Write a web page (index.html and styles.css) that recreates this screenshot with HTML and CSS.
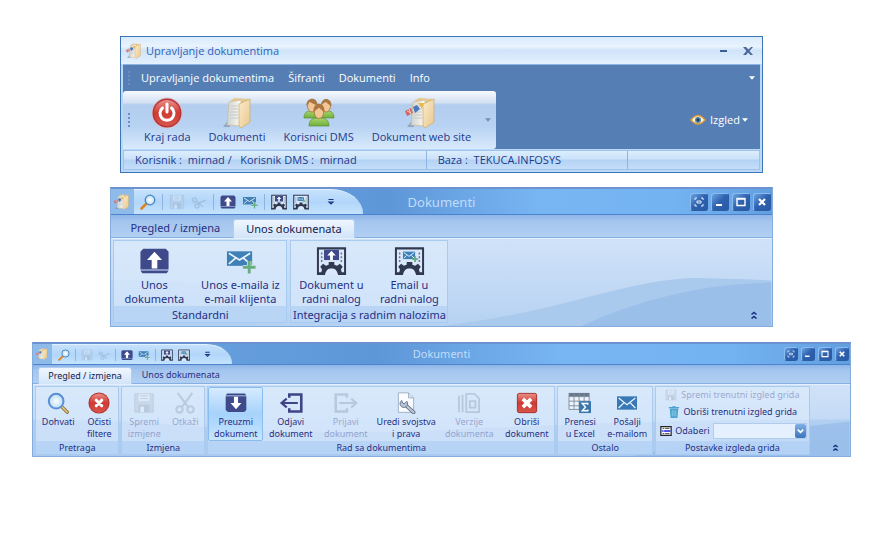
FILE: index.html
```html
<!DOCTYPE html>
<html lang="hr">
<head>
<meta charset="utf-8">
<title>Upravljanje dokumentima</title>
<link rel="stylesheet" href="styles.css">
</head>
<body>
<svg class="sprite" aria-hidden="true">
  <defs>
    <linearGradient id="g-red" x1="0" y1="0" x2="0" y2="1"><stop offset="0" stop-color="#e98f86"/><stop offset="0.5" stop-color="#cf3a34"/><stop offset="1" stop-color="#d8564c"/></linearGradient>
    <linearGradient id="g-folder" x1="0" y1="0" x2="1" y2="1"><stop offset="0" stop-color="#fbebca"/><stop offset="1" stop-color="#e8c88f"/></linearGradient>
    <linearGradient id="g-paper" x1="0" y1="0" x2="1" y2="0"><stop offset="0" stop-color="#cfd2cf"/><stop offset="1" stop-color="#fbfbf6"/></linearGradient>
    <linearGradient id="g-green" x1="0" y1="0" x2="0" y2="1"><stop offset="0" stop-color="#a9d56a"/><stop offset="1" stop-color="#6fae3d"/></linearGradient>
    <radialGradient id="g-lens"><stop offset="0" stop-color="#ffffff"/><stop offset="1" stop-color="#b5dcf7"/></radialGradient>
    <symbol id="power" viewBox="0 0 32 32"><circle cx="16" cy="16" r="15.500" fill="#d5c4cb"/><circle cx="16" cy="16" r="14.500" fill="#b8323a"/><circle cx="16" cy="16" r="13" fill="url(#g-red)"/><path d="M11.500 11a7 7 0 1 0 9 0M16 7v8" fill="none" stroke="#fff" stroke-width="3" stroke-linecap="round"/></symbol>
    <symbol id="folder" viewBox="0 0 32 32"><path d="M2 30l7-9v9z" fill="#7d8ba0" opacity=".6"/><path d="M10 3l4-2 14 1v25l-17 2z" fill="#e6c88f"/><path d="M8 5l12-2v26l-14-1z" fill="url(#g-paper)" stroke="#c9b58c" stroke-width=".6"/><path d="M10 9h7M10 12h7M9 15h8M9 18h8M9 21h8" stroke="#c5c9ca"/><path d="M18 7l11-5v23l-9 6-2-2z" fill="url(#g-folder)" stroke="#cfa968" stroke-width=".7"/></symbol>
    <symbol id="webdoc" viewBox="0 0 32 32"><use href="#folder"/><path d="M0 14l6-3 2 5-6 3z" fill="#d3655f"/><path d="M8 10l4-2 3 4-5 4z" fill="#4978bd"/><path d="M13 6l6 0-2 6z" fill="#e8b94d"/><path d="M2 14l4 2M4 12l2 5" stroke="#f4d0ca"/></symbol>
    <symbol id="users" viewBox="0 0 32 32"><g stroke="#5f9434" stroke-width=".7"><path d="M1 21c0-6 3-7 8-7s6 2 6 7z" fill="url(#g-green)"/><path d="M17 21c0-6 3-7 7-7s7 1 7 7z" fill="url(#g-green)"/><path d="M6 29c0-6 3-8 10-8s10 2 10 8z" fill="url(#g-green)"/></g><g fill="#f3c695" stroke="#a9733f" stroke-width=".8"><ellipse cx="9" cy="9" rx="4.500" ry="6"/><ellipse cx="23" cy="9" rx="4.500" ry="6"/><ellipse cx="16" cy="15" rx="4.700" ry="6.500"/></g><path d="M3.500 9c-1-9 11-10 11-1-4 0-6-3-8-3zM18 8c1-9 11-7 10.500 1-3-1-5-4-6-4zM10.500 15c-1-11 12-11 11 0-4-2-4-4-6-4z" fill="#ab7843"/></symbol>
    <symbol id="eye" viewBox="0 0 16 12"><path d="M1 6q7-9 14 0-7 8-14 0z" fill="#fff4dc" stroke="#dc9838" stroke-width="1.600"/><circle cx="8" cy="6" r="3" fill="#4e86a9"/><circle cx="8" cy="6" r="1.400" fill="#173a56"/></symbol>
    <symbol id="lens" viewBox="0 0 16 16"><path d="M6.500 9.500L1.500 14.500" stroke="#e08325" stroke-width="2.600" stroke-linecap="round"/><circle cx="10" cy="6" r="4.800" fill="url(#g-lens)" stroke="#4b87bd" stroke-width="1.300"/></symbol>
    <symbol id="search" viewBox="0 0 24 24"><path d="M16 16l6 6" stroke="#80642e" stroke-width="3.600" stroke-linecap="round"/><path d="M16 16l6 6" stroke="#e6c37a" stroke-width="1.800" stroke-linecap="round"/><circle cx="10" cy="10" r="8" fill="url(#g-lens)" stroke="#5b8ed2" stroke-width="2.200"/></symbol>
    <symbol id="floppy" viewBox="0 0 24 24"><path d="M2 2h20v20H2z" fill="#b1bccb" stroke="#8c9bb0"/><path d="M6 2h12v8H6z" fill="#e7edf5"/><path d="M8 4h8M8 7h8" stroke="#8c9bb0"/><path d="M6 14h12v8H6z" fill="#8c9bb0"/><path d="M8 16h4v6H8z" fill="#edf2f8"/></symbol>
    <symbol id="scissors" viewBox="0 0 24 24"><g fill="none" stroke="#8797ac" stroke-width="2.200"><path d="M4 1l11 15M20 1L9 16"/><circle cx="6" cy="19" r="3.500"/><circle cx="18" cy="19" r="3.500"/></g></symbol>
    <symbol id="snips" viewBox="0 0 16 16"><g fill="none" stroke="#8797ac" stroke-width="1.500"><path d="M15 6L6 10M12 13L5 7"/><circle cx="3.500" cy="6" r="2"/><circle cx="6" cy="12" r="2"/></g></symbol>
    <symbol id="upload" viewBox="0 0 32 32"><path d="M4 3h24l3 3v19H1V6z" fill="#3f4a8a"/><path d="M1 26h30l-2 3H3z" fill="#3f4a8a"/><path d="M16 6l8 9h-5v9h-6v-9H8z" fill="#fff"/></symbol>
    <symbol id="download" viewBox="0 0 32 32"><path d="M3 2h26l2 3H1z" fill="#3f4a8a"/><path d="M1 6h30v20l-3 3H4l-3-3z" fill="#3f4a8a"/><path d="M16 25l-8-9h5V7h6v9h5z" fill="#fff"/></symbol>
    <symbol id="mail" viewBox="0 0 24 16"><path d="M0 0h24v16H0z" fill="#3878b4"/><path d="M2 2l10 8 10-8M2 14l7-7M22 14l-7-7" fill="none" stroke="#eaf4ff" stroke-width="1.500"/></symbol>
    <symbol id="mailadd" viewBox="0 0 32 28"><path d="M2 4h26v15H2z" fill="#3f80b6"/><path d="M4 6l11 7 11-7M4 17l7-6M26 17l-7-6" fill="none" stroke="#eaf4ff" stroke-width="1.700"/><path d="M25 14v13M18.500 20.500h13" stroke="#d7e7fa" stroke-width="4.500"/><path d="M25 14v13M18.500 20.500h13" stroke="#67ad80" stroke-width="3"/></symbol>
    <symbol id="gearframe" viewBox="0 0 32 32"><path d="M1.500 31V2.500h29V31" fill="#d9e8fa" stroke="#303951" stroke-width="2.200"/><path d="M5.500 7v10M26.500 7v10" stroke="#6b7891" stroke-width="1.600" stroke-dasharray="2 2"/><path d="M1 31v-3h4l1-3-2-3 3-3 3 2 3-1v-3h6v3l3 1 3-2 3 3-2 3 1 3h4v3h-8c-1-5-3-7-7-7s-6 2-7 7z" fill="#303951"/></symbol>
    <symbol id="gearup" viewBox="0 0 32 32"><use href="#gearframe"/><path d="M8 4h16v11H8z" fill="#3f4a8a"/><path d="M16 5l4.500 5h-3v5h-3v-5h-3z" fill="#fff"/></symbol>
    <symbol id="gearmail" viewBox="0 0 32 32"><use href="#gearframe"/><path d="M9 6h13v8H9z" fill="#3f80b6"/><path d="M10 7l5.500 4L21 7M10 13l3-3M21 13l-3-3" fill="none" stroke="#eaf4ff"/><path d="M22 11v6M19 14h6" stroke="#67ad80" stroke-width="2"/></symbol>
    <symbol id="clear" viewBox="0 0 24 24"><circle cx="12" cy="12" r="11.500" fill="#b5302b"/><circle cx="12" cy="12" r="10.500" fill="url(#g-red)"/><path d="M9 9l6 6M15 9l-6 6" stroke="#fff" stroke-width="3.400" stroke-linecap="round"/></symbol>
    <symbol id="delete" viewBox="0 0 24 24"><rect x="1.500" y="1.500" width="21" height="21" rx="2" fill="url(#g-red)" stroke="#a32a20"/><path d="M7.500 7.500l9 9M16.500 7.500l-9 9" stroke="#fff" stroke-width="4"/></symbol>
    <symbol id="checkout" viewBox="0 0 28 24"><path d="M12 6V2h14v20H12v-4" fill="none" stroke="#3f4484" stroke-width="3"/><path d="M22 12H4M9 7l-6 5 6 5" fill="none" stroke="#3f4484" stroke-width="2.600"/></symbol>
    <symbol id="checkin" viewBox="0 0 28 24"><path d="M15 6V2H2v20h13v-4" fill="none" stroke="#8390aa" stroke-width="3"/><path d="M6 12h19M20 7l6 5-6 5" fill="none" stroke="#8390aa" stroke-width="2.600"/></symbol>
    <symbol id="props" viewBox="0 0 24 26"><path d="M3 1h12l6 6v17H3z" fill="#fafcff" stroke="#98a6bd"/><path d="M15 1v6h6" fill="#d8e2f0" stroke="#98a6bd"/><path d="M11 15l10 9" stroke="#56657e" stroke-width="4.400" stroke-linecap="round"/><path d="M11 15l10 9" stroke="#b9c5d6" stroke-width="2.600" stroke-linecap="round"/><path d="M7 10a4.500 4.500 0 1 0 6 1l-3 3-2-1z" fill="#b9c5d6" stroke="#56657e"/></symbol>
    <symbol id="versions" viewBox="0 0 26 24"><g fill="none" stroke="#8390aa" stroke-width="2"><path d="M2 22V4M6 22V3M10 22V2h9l5 5v15z"/><path d="M14 10h6v7h-6z"/></g></symbol>
    <symbol id="excel" viewBox="0 0 26 24"><path d="M1 1h22v18H1z" fill="#edf4fc"/><path d="M1 1h22v4H1z" fill="#68798c"/><path d="M1 5h22M1 10h22M1 15h22M1 19h12M1 1v18M6.500 1v18M12 1v18M17.500 1v10M23 1v10" stroke="#7c8c9d" fill="none"/><path d="M12 10h13v13H12z" fill="#3977ae"/><path d="M21.500 14v-1.500h-6l3.500 4-3.500 4h6V19" fill="none" stroke="#fff" stroke-width="1.600"/></symbol>
    <symbol id="trash" viewBox="0 0 12 14"><path d="M1 3h10l-1 11H2z" fill="#4aa3cf"/><path d="M0 2h12M4 1h4" stroke="#4aa3cf" stroke-width="1.500"/><path d="M4 5v7M6 5v7M8 5v7" stroke="#8ccbe8"/></symbol>
    <symbol id="list" viewBox="0 0 14 12"><path d="M1 1h12v10H1z" fill="#fff" stroke="#202228" stroke-width="1.400"/><path d="M2 5h10v2H2z" fill="#3038e8"/><path d="M3 3h2M3 9h2M6 3h5M6 9h5" stroke="#2c2c38"/><path d="M3 6h2" stroke="#fff"/></symbol>
    <symbol id="caret" viewBox="0 0 7 4"><path d="M0 0h7L3.500 4z" fill="currentColor"/></symbol>
    <symbol id="more" viewBox="0 0 8 8"><path d="M1.500 1.500h5M2 4h4L4 6z" fill="none" stroke="currentColor" stroke-width="1.200"/></symbol>
    <symbol id="collapse" viewBox="0 0 8 8"><path d="M1.500 3.500L4 1.500l2.500 2M1.500 7.500l2.500-2 2.500 2" fill="none" stroke="#152a80" stroke-width="1.500"/></symbol>
    <symbol id="w-full" viewBox="0 0 16 16"><path d="M4 6V4h2M10 4h2v2M12 10v2h-2M6 12H4v-2" fill="none" stroke="#e6f3ff"/><path d="M6 7h4v2H6z" fill="none" stroke="#e6f3ff"/></symbol>
    <symbol id="w-min" viewBox="0 0 16 16"><path d="M4 11h6" stroke="#fff" stroke-width="2"/></symbol>
    <symbol id="w-max" viewBox="0 0 16 16"><path d="M4 4.500h8v7H4zM4 5h8" fill="none" stroke="#fff" stroke-width="1.400"/></symbol>
    <symbol id="w-close" viewBox="0 0 16 16"><path d="M5 5l6 6M11 5l-6 6" stroke="#fff" stroke-width="2.200"/></symbol>
  </defs>
</svg>

<main class="page">
  <section class="main-window">
    <header class="caption">
      <svg class="i16"><use href="#webdoc"/></svg>
      <span class="caption-text">Upravljanje dokumentima</span>
      <button class="plain" aria-label="Minimiziraj"><svg class="i12" viewBox="0 0 12 12"><path d="M3 6h7" stroke="#3c5d92" stroke-width="2"/></svg></button>
      <button class="plain" aria-label="Zatvori"><svg class="i12" viewBox="0 0 12 12"><path d="M1 2h3l2.500 2.500L9 2h2L7.500 6l3.500 4H8.500L6 7.500 4 10H1l3.500-4z" fill="#4a6698"/></svg></button>
    </header>
    <div class="main-body">
      <nav class="menubar">
        <i class="grip"></i>
        <a href="#">Upravljanje dokumentima</a>
        <a href="#">Šifranti</a>
        <a href="#">Dokumenti</a>
        <a href="#">Info</a>
        <svg class="caret menu-caret"><use href="#caret"/></svg>
      </nav>
      <div class="toolrow">
        <div class="toolbar">
          <i class="grip"></i>
          <button class="tool"><svg class="i32"><use href="#power"/></svg>Kraj rada</button>
          <button class="tool"><svg class="i32"><use href="#folder"/></svg>Dokumenti</button>
          <button class="tool"><svg class="i32"><use href="#users"/></svg>Korisnici DMS</button>
          <button class="tool"><svg class="i32"><use href="#webdoc"/></svg>Dokument web site</button>
          <svg class="caret tool-caret"><use href="#caret"/></svg>
        </div>
        <button class="view"><svg class="eye"><use href="#eye"/></svg>Izgled<svg class="caret"><use href="#caret"/></svg></button>
      </div>
    </div>
    <footer class="status">
      <span class="status-user">Korisnik :&nbsp; mirnad /&nbsp;&nbsp; Korisnik DMS :&nbsp; mirnad</span>
      <span class="status-base">Baza :&nbsp; TEKUCA.INFOSYS</span>
      <span class="status-rest"></span>
    </footer>
  </section>

  <section class="ribbon large">
    <header class="titlebar">
      <div class="quick">
        <span class="app"><svg class="qi"><use href="#webdoc"/></svg></span>
        <div class="quick-items">
          <button aria-label="Dohvati"><svg class="qi"><use href="#lens"/></svg></button><i class="sep"></i>
          <button aria-label="Spremi" disabled><svg class="qi"><use href="#floppy"/></svg></button>
          <button aria-label="Otkaži" disabled><svg class="qi"><use href="#snips"/></svg></button><i class="sep"></i>
          <button aria-label="Unos dokumenta"><svg class="qi"><use href="#upload"/></svg></button>
          <button aria-label="Unos e-maila"><svg class="qi"><use href="#mailadd"/></svg></button><i class="sep"></i>
          <button aria-label="Dokument u radni nalog"><svg class="qi"><use href="#gearup"/></svg></button>
          <button aria-label="Email u radni nalog"><svg class="qi"><use href="#gearmail"/></svg></button>
          <button class="more" aria-label="Više"><svg><use href="#more"/></svg></button>
        </div>
      </div>
      <h2>Dokumenti</h2>
      <div class="controls">
        <button aria-label="Cijeli zaslon"><svg><use href="#w-full"/></svg></button>
        <button aria-label="Minimiziraj"><svg><use href="#w-min"/></svg></button>
        <button aria-label="Maksimiziraj"><svg><use href="#w-max"/></svg></button>
        <button aria-label="Zatvori"><svg><use href="#w-close"/></svg></button>
      </div>
    </header>
    <nav class="tabs">
      <button class="tab">Pregled / izmjena</button>
      <button class="tab active">Unos dokumenata</button>
    </nav>
    <div class="panel">
      <svg class="waves" viewBox="0 0 660 88" preserveAspectRatio="none"><path d="M0 42q40-2 85 4t60 10v32H0z" fill="#a9caf0" opacity=".35"/><path d="M330 88Q400 80 480 58T600 40q30 0 60 2v46z" fill="#a9c9ed"/><path d="M470 88Q560 46 660 44v44z" fill="#9ac0ea"/></svg>
      <div class="group">
        <div class="actions">
          <button class="action w80"><svg class="gi"><use href="#upload"/></svg><span>Unos<br>dokumenta</span></button>
          <button class="action w92"><svg class="gi"><use href="#mailadd"/></svg><span>Unos e-maila iz<br>e-mail klijenta</span></button>
        </div>
        <div class="group-name">Standardni</div>
      </div>
      <div class="group">
        <div class="actions">
          <button class="action w80"><svg class="gi"><use href="#gearup"/></svg><span>Dokument u<br>radni nalog</span></button>
          <button class="action w76"><svg class="gi"><use href="#gearmail"/></svg><span>Email u<br>radni nalog</span></button>
        </div>
        <div class="group-name">Integracija s radnim nalozima</div>
      </div>
      <button class="collapse" aria-label="Sakrij vrpcu"><svg><use href="#collapse"/></svg></button>
    </div>
  </section>

  <section class="ribbon small">
    <header class="titlebar">
      <div class="quick">
        <span class="app"><svg class="qi"><use href="#webdoc"/></svg></span>
        <div class="quick-items">
          <button aria-label="Dohvati"><svg class="qi"><use href="#lens"/></svg></button><i class="sep"></i>
          <button aria-label="Spremi" disabled><svg class="qi"><use href="#floppy"/></svg></button>
          <button aria-label="Otkaži" disabled><svg class="qi"><use href="#snips"/></svg></button><i class="sep"></i>
          <button aria-label="Unos dokumenta"><svg class="qi"><use href="#upload"/></svg></button>
          <button aria-label="Unos e-maila"><svg class="qi"><use href="#mailadd"/></svg></button><i class="sep"></i>
          <button aria-label="Dokument u radni nalog"><svg class="qi"><use href="#gearup"/></svg></button>
          <button aria-label="Email u radni nalog"><svg class="qi"><use href="#gearmail"/></svg></button>
          <button class="more" aria-label="Više"><svg><use href="#more"/></svg></button>
        </div>
      </div>
      <h2>Dokumenti</h2>
      <div class="controls">
        <button aria-label="Cijeli zaslon"><svg><use href="#w-full"/></svg></button>
        <button aria-label="Minimiziraj"><svg><use href="#w-min"/></svg></button>
        <button aria-label="Maksimiziraj"><svg><use href="#w-max"/></svg></button>
        <button aria-label="Zatvori"><svg><use href="#w-close"/></svg></button>
      </div>
    </header>
    <nav class="tabs">
      <button class="tab active">Pregled / izmjena</button>
      <button class="tab">Unos dokumenata</button>
    </nav>
    <div class="panel">
      <svg class="waves" viewBox="0 0 816 70" preserveAspectRatio="none"><path d="M0 34q90 0 180 8t230 2 220-8 186-2v36H0z" fill="#9cc2ee" opacity=".45"/><path d="M600 70q100-22 216-34v34z" fill="#8db6e6" opacity=".55"/></svg>
      <div class="group">
        <div class="actions">
          <button class="action w44"><svg class="gi"><use href="#search"/></svg><span>Dohvati</span></button>
          <button class="action w38"><svg class="gi"><use href="#clear"/></svg><span>Očisti<br>filtere</span></button>
        </div>
        <div class="group-name">Pretraga</div>
      </div>
      <div class="group">
        <div class="actions">
          <button class="action w44" disabled><svg class="gi"><use href="#floppy"/></svg><span>Spremi<br>izmjene</span></button>
          <button class="action w38" disabled><svg class="gi"><use href="#scissors"/></svg><span>Otkaži</span></button>
        </div>
        <div class="group-name">Izmjena</div>
      </div>
      <div class="group">
        <div class="actions">
          <button class="action w55 hot"><svg class="gi"><use href="#download"/></svg><span>Preuzmi<br>dokument</span></button>
          <button class="action w55"><svg class="gi"><use href="#checkout"/></svg><span>Odjavi<br>dokument</span></button>
          <button class="action w55" disabled><svg class="gi"><use href="#checkin"/></svg><span>Prijavi<br>dokument</span></button>
          <button class="action w66"><svg class="gi"><use href="#props"/></svg><span>Uredi svojstva<br>i prava</span></button>
          <button class="action w60" disabled><svg class="gi"><use href="#versions"/></svg><span>Verzije<br>dokumenta</span></button>
          <button class="action w55"><svg class="gi"><use href="#delete"/></svg><span>Obriši<br>dokument</span></button>
        </div>
        <div class="group-name">Rad sa dokumentima</div>
      </div>
      <div class="group">
        <div class="actions">
          <button class="action w44"><svg class="gi"><use href="#excel"/></svg><span>Prenesi<br>u Excel</span></button>
          <button class="action w50"><svg class="gi mail"><use href="#mail"/></svg><span>Pošalji<br>e-mailom</span></button>
        </div>
        <div class="group-name">Ostalo</div>
      </div>
      <div class="group">
        <div class="actions layout-actions">
          <button class="line" disabled><svg class="i12"><use href="#floppy"/></svg>Spremi trenutni izgled grida</button>
          <button class="line"><svg class="i12"><use href="#trash"/></svg>Obriši trenutni izgled grida</button>
          <div class="pick">
            <svg class="i12"><use href="#list"/></svg>
            <label for="layout">Odaberi</label>
            <span class="select"><select id="layout"><option></option></select><svg viewBox="0 0 12 14"><path d="M3 5.500l3 3 3-3" fill="none" stroke="#fff" stroke-width="1.800"/></svg></span>
          </div>
        </div>
        <div class="group-name">Postavke izgleda grida</div>
      </div>
      <button class="collapse" aria-label="Sakrij vrpcu"><svg><use href="#collapse"/></svg></button>
    </div>
  </section>
</main>
</body>
</html>
```
FILE: styles.css
```css
* { box-sizing: border-box; }
body { margin: 0; background: #fff; color: #1d3a8c; font: 11px/16px "Open Sans", "Noto Sans", sans-serif; }
button, select { margin: 0; padding: 0; border: 0; background: none; color: inherit; font: inherit; }
svg { display: block; flex: none; }
.sprite { position: absolute; width: 0; height: 0; }
.page { display: flex; flex-direction: column; align-items: center; padding: 36px 2px 24px 0; }
.i12 { width: 12px; height: 12px; }
.i16 { width: 16px; height: 16px; }
.i32 { width: 32px; height: 32px; }

/* Main window */
.main-window { width: 72.8%; border: 1px solid #3c76b8; padding: 0 2px 2px; background: #bdd8f6; }
.caption { display: flex; align-items: center; gap: 4px; height: 27px; margin: 0 -2px; padding: 0 8px 0 5px; background: linear-gradient(#d9ebfc, #e9f3fd 35%, #cfe3f9 50%, #e4f1fe); color: #2f63b5; }
.caption-text { flex: 1; }
.plain { margin-left: 9px; }
.main-body { background: #557eb5; border-top: 1px solid #8cb4e2; }
.menubar { display: flex; align-items: center; gap: 14px; height: 26px; padding: 0 5px; }
.menubar a { color: #fff; text-decoration: none; }
.grip { width: 2px; height: 14px; background: repeating-linear-gradient(#6d8fc0 0 2px, transparent 2px 4px); }
.menubar .grip { margin-right: -3px; }
.caret { width: 6px; height: 4px; color: #fff; }
.menu-caret { margin-left: auto; }
.toolrow { display: flex; justify-content: space-between; align-items: center; height: 58px; }
.toolbar { display: flex; align-items: center; height: 58px; padding: 0 5px; border-radius: 3px 3px 3px 0; background: linear-gradient(#f6faff, #d3e1f3 20%, #b3cdee 24%, #b7d2f2 60%, #d8eafc); }
.toolbar .grip { margin-right: 5px; }
.tool { display: flex; flex-direction: column; align-items: center; padding: 2px 9px 0; }
.tool-caret { color: #7290bb; margin-left: 5px; }
.view { display: flex; align-items: center; gap: 4px; margin-right: 12px; color: #fff; }
.view .caret { margin-left: -2px; }
.eye { width: 16px; height: 12px; }
.status { display: flex; align-items: stretch; height: 20px; margin-top: 1px; border: 1px solid #9dc2ec; background: linear-gradient(#dcedfd, #cbe2fa 45%, #b3d2f4 50%, #c5defa); line-height: 18px; }
.status span { padding-left: 11px; }
.status-user { flex: 0 0 47.500%; }
.status-base { flex: 0 0 31.800%; border-left: 1px solid #8fb5e0; }
.status-rest { flex: 1; border-left: 1px solid #8fb5e0; }

/* Ribbon windows */
.ribbon { border: 1px solid #84addd; border-top: 2px solid #6c92cf; background: #a9caf0; color: #272f83; font-family: "Noto Sans", "Open Sans", sans-serif; }
.large { width: 75%; margin-top: 14px; font-size: 11px; line-height: 14px; --qi: 16px; --ctl: 18px; }
.small { width: 92.700%; margin-top: 15px; font-size: 9px; line-height: 12px; --qi: 12px; --ctl: 14px; }
.titlebar { display: grid; grid-template-columns: 1fr auto 1fr; align-items: center; background: linear-gradient(90deg, #6fa7e3, #5e97d8 42%, #78b5f3 65%, #74b3f2 85%, #629fdf); border-bottom: 1px solid #4d83cc; }
.large .titlebar { height: 26px; }
.small .titlebar { height: 21px; }
.titlebar h2 { margin: 0; color: #c1dcf8; font-weight: 400; font-size: 13px; line-height: 16px; }
.small h2 { font-size: 11px; }
.quick { display: flex; align-self: stretch; }
.app { display: flex; align-items: center; padding: 0 4px 0 3px; background: #8fbbea; }
.quick-items { display: flex; align-items: center; border-top: 1px solid #e1f1ff; border-radius: 0 32px 0 0 / 0 25px 0 0; background: linear-gradient(#c5e1fc, #b2d6fa 50%, #c3e3ff); }
.large .quick-items { gap: 6px; padding: 0 28px 0 6px; }
.small .quick-items { gap: 5px; padding: 0 21px 0 6px; }
.qi { width: var(--qi); height: var(--qi); }
.sep { width: 1px; height: 16px; background: #90b3de; }
.small .sep { height: 12px; }
button:disabled { opacity: .35; }
.more { margin-left: 12px; color: #1a3480; }
.small .more { margin-left: 9px; }
.more svg { width: 8px; height: 8px; }
.small .more svg { width: 7px; height: 7px; }
.controls { display: flex; justify-content: flex-end; gap: 3px; padding-right: 1px; }
.controls button { width: var(--ctl); height: var(--ctl); border: 1px solid #2a5ba5; border-top-color: #8bbcf0; border-left-color: #8bbcf0; border-radius: 3px; background: linear-gradient(135deg, #6aa3e4, #2f61ae 50%, #2a5aa8); }
.controls svg { width: 100%; height: 100%; }
.tabs { display: flex; align-items: flex-end; background: linear-gradient(#8db6e8, #a4c5ee 30%, #b1cff2); border-bottom: 1px solid #86afe2; }
.tab { border: 1px solid transparent; border-bottom: 0; border-radius: 3px 3px 0 0; white-space: nowrap; }
.tab.active { position: relative; margin-bottom: -1px; border-color: #b0cef2; background: linear-gradient(#f0f6fe, #d2e4f9); color: #111a50; }
.large .tabs { height: 23px; padding-left: 6px; }
.large .tab { height: 19px; padding: 0 12px; }
.small .tabs { height: 19px; padding-left: 5px; }
.small .tab { height: 17px; padding: 0 9px; }
.panel { position: relative; display: flex; border-top: 1px solid #e3effc; background: linear-gradient(#d0e2f8, #b6d2f2); }
.large .panel { gap: 3px; padding: 1px 2px 3px; }
.small .panel { gap: 2px; padding: 1px 2px; }
.waves { position: absolute; left: 0; top: 0; width: 100%; height: 100%; }
.group { position: relative; border: 1px solid #aacbf0; background: rgba(222, 237, 254, .6); text-align: center; }
.actions { display: flex; align-items: stretch; }
.large .actions { height: 65px; }
.small .actions { height: 54px; }
.action { display: flex; flex-direction: column; align-items: center; justify-content: flex-start; border: 1px solid transparent; white-space: nowrap; text-align: center; }
.large .action { padding-top: 4px; }
.small .action { padding-top: 4px; }
.gi { margin-bottom: 2px; }
.large .gi { width: 31px; height: 30px; }
.small .gi { width: 24px; height: 22px; }
.small .mail { width: 20px; }
.hot { border-color: #8bbcee; border-radius: 2px; background: linear-gradient(#d6ebff, #a6d2fb 50%, #c6e5ff); }
.w80 { width: 80px; }
.w92 { width: 92px; }
.w76 { width: 76px; }
.w38 { width: 38px; }
.w44 { width: 44px; }
.w50 { width: 50px; }
.w55 { width: 55px; }
.w60 { width: 60px; }
.w66 { width: 66px; }
.group-name { border-top: 1px solid #b9d4f4; background: rgba(172, 206, 244, .65); white-space: nowrap; }
.large .group-name { height: 16px; line-height: 15px; }
.small .group-name { height: 13px; line-height: 12px; }
.layout-actions { flex-direction: column; align-items: center; justify-content: space-around; }
.line, .pick { display: flex; align-items: center; gap: 4px; white-space: nowrap; }
.pick { gap: 3px; padding: 0 2px 0 4px; }
.select { position: relative; display: block; width: 94px; }
.select select { display: block; width: 100%; height: 16px; appearance: none; border: 1px solid #b0cbeb; background: #e4f0fd; }
.select svg { position: absolute; right: 1px; top: 1px; width: 11px; height: 14px; border-radius: 2px; background: linear-gradient(#7fb0e6, #3e74bb); pointer-events: none; }
.collapse { position: relative; align-self: flex-end; margin-left: auto; }
.large .collapse { padding: 0 12px 4px 0; }
.small .collapse { padding: 0 9px 4px 0; }
.collapse svg { width: 8px; height: 8px; }
.small .collapse svg { width: 7px; height: 7px; }
```
